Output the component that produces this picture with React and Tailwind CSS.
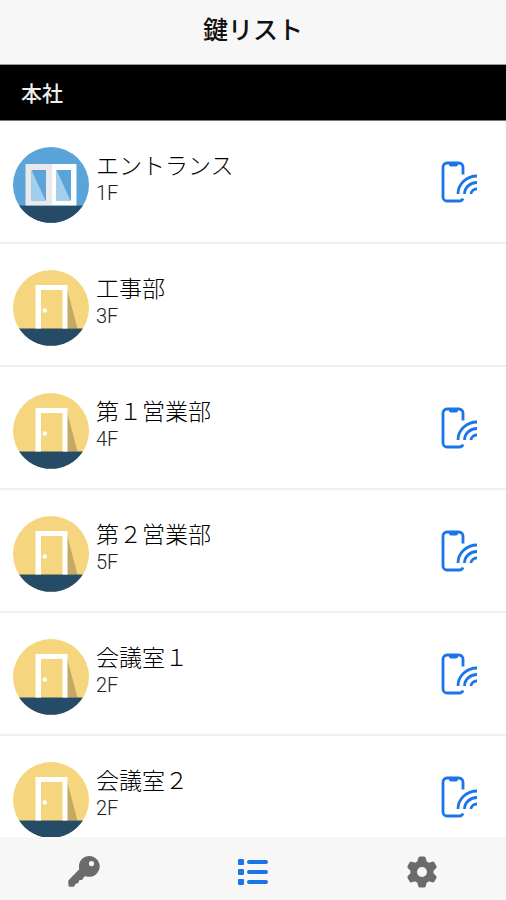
import React, { useState } from 'react';

const rooms = [
    { id: 1, name: 'エントランス', floor: '1F', type: 'entrance', unlockable: true },
    { id: 2, name: '工事部', floor: '3F', type: 'door', unlockable: false },
    { id: 3, name: '第１営業部', floor: '4F', type: 'door', unlockable: true },
    { id: 4, name: '第２営業部', floor: '5F', type: 'door', unlockable: true },
    { id: 5, name: '会議室１', floor: '2F', type: 'door', unlockable: true },
    { id: 6, name: '会議室２', floor: '2F', type: 'door', unlockable: true },
];

const gearTeeth = [0, 60, 120, 180, 240, 300];

const EntranceIcon = () => (
    <svg viewBox="0 0 76 76" className="size-[76px] shrink-0" aria-hidden="true">
        <circle cx="38" cy="38" r="38" fill="#5ba4d9" />
        <path d="M6.1 58.5a38 38 0 0 0 63.8 0z" fill="#264b66" />
        <rect x="12.5" y="17" width="26.5" height="41.5" fill="#e9e9ec" />
        <rect x="39" y="17" width="24.5" height="41.5" fill="#fcfcfd" />
        <rect x="18.5" y="23" width="14.5" height="30.5" fill="#5ba4d9" />
        <path d="M18.5 23v30.5h14z" fill="#a3cfee" />
        <rect x="43.5" y="23" width="14.5" height="30.5" fill="#5ba4d9" />
        <path d="M43.5 23v30.5h14z" fill="#a3cfee" />
    </svg>
);

const DoorIcon = () => (
    <svg viewBox="0 0 76 76" className="size-[76px] shrink-0" aria-hidden="true">
        <circle cx="38" cy="38" r="38" fill="#f5d67f" />
        <path d="M54 19l10.5 39.5H54z" fill="#c4a865" />
        <path d="M6.1 58.5a38 38 0 0 0 63.8 0z" fill="#264b66" />
        <path d="M22.5 58.5V15h32v43.5h-5V20H28v38.5z" fill="#fff" />
        <circle cx="31.8" cy="40.5" r="2.2" fill="#fff" />
    </svg>
);

const PhoneSignalIcon = () => (
    <svg viewBox="0 0 37 42" className="h-[42px] w-[37px]" fill="none" stroke="#1a76e8" strokeWidth="2.8" aria-hidden="true">
        <path d="M22 13.5V6a4 4 0 0 0-4-4H6a4 4 0 0 0-4 4v30a4 4 0 0 0 4 4h12.5q2.500 0 3.500-2.500" />
        <path d="M8 2h9v1.500a2 2 0 0 1-2 2h-5a2 2 0 0 1-2-2z" fill="#1a76e8" stroke="none" />
        <path d="M17 33A19 18 0 0 1 36 15M23.500 33A12.500 11.500 0 0 1 36 21.500M29.800 33A6 6 0 0 1 36 28" />
    </svg>
);

const KeyIcon = () => (
    <svg viewBox="0 0 32 31" className="h-[31px] w-8" fill="currentColor" aria-hidden="true">
        <path
            fillRule="evenodd"
            d="M21.3 0a10.4 10.4 0 1 1-3.5 20.2l-1.8.6-1.6 3-3.2.5-.8 2.7-2.4.5-1.6 2.6q-.5.7-1.3.7H2q-1.3 0-1.5-1.3L.2 26q-.1-1.1.6-1.900L11.300 13.200A10.4 10.4 0 0 1 21.300 0zM23.500 5a2.600 2.600 0 1 0 0 5.200 2.600 2.600 0 0 0 0-5.200z"
        />
    </svg>
);

const ListIcon = () => (
    <svg viewBox="0 0 30 26" className="h-[26px] w-[30px]" fill="#1a76e8" aria-hidden="true">
        <rect x="0" y="0" width="6" height="6" rx="1" />
        <rect x="0" y="10" width="6" height="6" rx="1" />
        <rect x="0" y="20" width="6" height="6" rx="1" />
        <rect x="9" y="1" width="21" height="4" rx="2" />
        <rect x="9" y="11" width="21" height="4" rx="2" />
        <rect x="9" y="21" width="21" height="4" rx="2" />
    </svg>
);

const GearIcon = () => (
    <svg viewBox="0 0 32 32" className="size-8" fill="currentColor" aria-hidden="true">
        <circle cx="16" cy="16" r="8.3" fill="none" stroke="currentColor" strokeWidth="6.6" />
        {gearTeeth.map((angle) => (
            <path
                key={angle}
                d="M11 7l1.200-5q.4-1.500 1.800-1.500h4q1.400 0 1.800 1.500L21 7z"
                transform={`rotate(${angle} 16 16)`}
            />
        ))}
    </svg>
);

const RoomRow = ({ room }) => (
    <li className="flex items-start border-b-2 border-[#efefef] pt-[26px] pr-7 pb-[19px] pl-[13px]">
        {room.type === 'entrance' ? <EntranceIcon /> : <DoorIcon />}
        <div className="ml-[7px] grow font-light">
            <p className="text-[23px] leading-[34px] text-black">{room.name}</p>
            <p className="font-[Roboto,sans-serif] text-[20px] leading-6 text-[#222]">{room.floor}</p>
        </div>
        {room.unlockable && (
            <button type="button" aria-label={`${room.name}を解錠`} className="mt-3.5 shrink-0">
                <PhoneSignalIcon />
            </button>
        )}
    </li>
);

const App = () => {
    const [activeTab, setActiveTab] = useState('list');

    const tabs = [
        { id: 'keys', label: '鍵', icon: <KeyIcon /> },
        { id: 'list', label: '鍵リスト', icon: <ListIcon /> },
        { id: 'settings', label: '設定', icon: <GearIcon /> },
    ];

    return (
        <div className="flex h-screen flex-col bg-white font-['Noto_Sans_CJK_JP',sans-serif]">
            <header className="flex h-[65px] shrink-0 items-center justify-center border-b border-[#9a9a9a] bg-[#f7f7f7] pb-2">
                <h1 className="text-[25px] leading-8 font-medium text-[#111]">鍵リスト</h1>
            </header>

            <main className="grow overflow-y-auto [scrollbar-width:none]">
                <h2 className="flex h-14 items-center border-b border-[#777] bg-black px-[21px] text-[21px] font-medium text-[#eee]">
                    本社
                </h2>
                <ul>
                    {rooms.map((room) => (
                        <RoomRow key={room.id} room={room} />
                    ))}
                </ul>
            </main>

            <nav className="grid h-[63px] shrink-0 grid-cols-3 bg-[#f7f7f7] pt-1.5">
                {tabs.map((tab) => (
                    <button
                        key={tab.id}
                        type="button"
                        aria-label={tab.label}
                        aria-current={activeTab === tab.id ? 'page' : undefined}
                        onClick={() => setActiveTab(tab.id)}
                        className="flex items-center justify-center text-[#6b6b6b]"
                    >
                        {tab.icon}
                    </button>
                ))}
            </nav>
        </div>
    );
};

export default App;
